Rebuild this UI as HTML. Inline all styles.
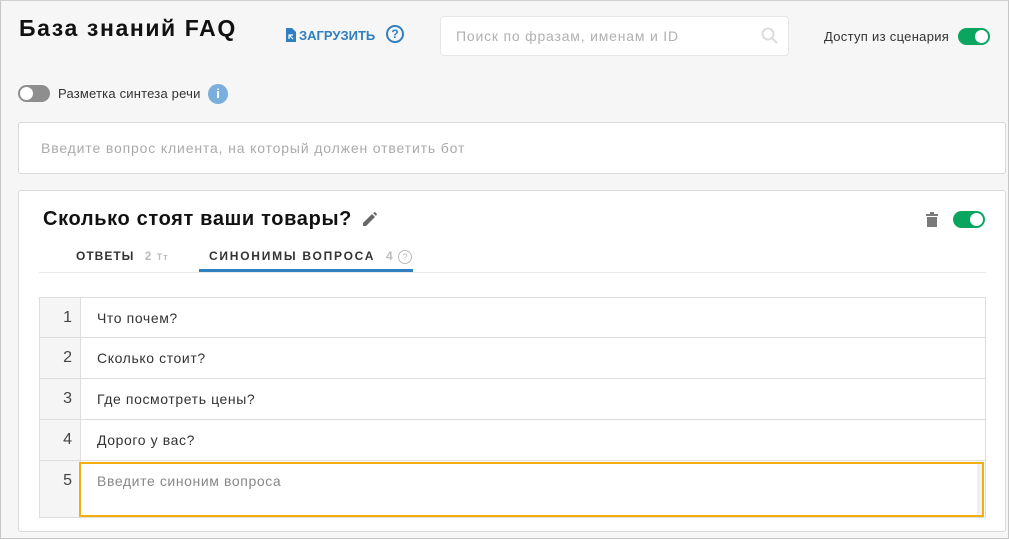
<!DOCTYPE html>
<html><head><meta charset="utf-8"><style>
*{box-sizing:border-box;margin:0;padding:0}
body{width:1009px;height:539px;overflow:hidden;background:#f6f6f6;font-family:"Liberation Sans","DejaVu Sans",sans-serif;color:#222;position:relative}
.frame{position:absolute;left:0;top:0;width:1009px;height:539px;border:1px solid #c6c6c6;border-top-color:#d0d0d0}
.abs{position:absolute}
.tog{position:absolute;width:32px;height:17px;border-radius:9px}
.tog i{position:absolute;top:2px;width:13px;height:13px;border-radius:50%;background:#fff}
.row{position:absolute;left:39px;width:947px;height:41px;border-bottom:1px solid #ddd;background:#fff}
.num{position:absolute;left:0;top:0;width:41px;height:100%;background:#f5f5f5;border-right:1px solid #ddd;text-align:right;padding-right:8px;font-size:16px;line-height:40px;color:#444}
.txt{position:absolute;left:57px;top:0;line-height:40px;font-size:14px;color:#333;letter-spacing:.6px}
</style></head><body>
<div class="frame"></div>
<div class="abs" style="left:19px;top:15px;font-size:23px;font-weight:bold;color:#111;letter-spacing:1.6px">База знаний FAQ</div>
<svg class="abs" style="left:286px;top:28px" width="10" height="14" viewBox="0 0 10 14"><path d="M0 0h6l4 4v10H0z" fill="#2f7fc1"/><path d="M3 7l4 4M3 11V7h4" stroke="#fff" stroke-width="1.2" fill="none"/></svg>
<div class="abs" style="left:299px;top:28px;font-size:13px;font-weight:bold;color:#2f7fc1">ЗАГРУЗИТЬ</div>
<div class="abs" style="left:386px;top:25px;width:18px;height:18px;border:2px solid #2f7fc1;border-radius:50%;color:#2f7fc1;font-size:12px;font-weight:bold;text-align:center;line-height:14px">?</div>
<div class="abs" style="left:440px;top:16px;width:349px;height:40px;background:#fff;border:1px solid #e6e6e6;border-radius:4px;font-size:14px;color:#b0b0b0;padding:11px 15px;letter-spacing:.8px;white-space:nowrap">Поиск по фразам, именам и ID</div>
<svg class="abs" style="left:761px;top:27px" width="17" height="17"><circle cx="7" cy="7" r="5.5" stroke="#ddd" stroke-width="2" fill="none"/><path d="M11 11l5 5" stroke="#ddd" stroke-width="2"/></svg>
<div class="abs" style="left:824px;top:29px;font-size:13px;color:#333;letter-spacing:.3px">Доступ из сценария</div>
<div class="tog" style="left:958px;top:28px;background:#0aa55f"><i style="right:2px"></i></div>
<div class="tog" style="left:18px;top:85px;background:#8e8e8e"><i style="left:2px"></i></div>
<div class="abs" style="left:58px;top:86px;font-size:13px;color:#333;letter-spacing:.2px">Разметка синтеза речи</div>
<div class="abs" style="left:208px;top:84px;width:20px;height:20px;border-radius:50%;background:#7aaedc;color:#fff;font-size:13px;font-weight:bold;text-align:center;line-height:20px">i</div>
<div class="abs" style="left:18px;top:122px;width:988px;height:52px;background:#fff;border:1px solid #dadada;border-radius:3px;font-size:14px;color:#aaa;padding:17px 22px;letter-spacing:.85px;white-space:nowrap">Введите вопрос клиента, на который должен ответить бот</div>
<div class="abs" style="left:18px;top:190px;width:988px;height:342px;background:#fff;border:1px solid #dadada;border-radius:3px"></div>
<div class="abs" style="left:43px;top:208px;font-size:20px;font-weight:bold;color:#111;letter-spacing:.65px">Сколько стоят ваши товары?</div>
<svg class="abs" style="left:363px;top:212px" width="14" height="14" viewBox="0 0 14 14"><path d="M0 14v-3l9-9 3 3-9 9zM10 1l2-1 2 2-1 2z" fill="#666"/></svg>
<svg class="abs" style="left:926px;top:212px" width="12" height="15" viewBox="0 0 12 15"><path d="M0 2h12v2H0zM4 0h4v2H4zM1 5h10v10H1z" fill="#7a7a7a"/></svg>
<div class="tog" style="left:953px;top:211px;background:#0aa55f"><i style="right:2px"></i></div>
<div class="abs" style="left:39px;top:272px;width:947px;height:1px;background:#e8e8e8"></div>
<div class="abs" style="left:76px;top:249px;font-size:12px;font-weight:bold;letter-spacing:1px;color:#333">ОТВЕТЫ <span style="color:#bbb;margin-left:6px">2 <span style="font-size:9px">Tт</span></span></div>
<div class="abs" style="left:209px;top:249px;font-size:12px;font-weight:bold;letter-spacing:1.75px;color:#333">СИНОНИМЫ ВОПРОСА</div>
<div class="abs" style="left:386px;top:249px;font-size:12px;font-weight:bold;color:#bbb">4</div>
<div class="abs" style="left:398px;top:250px;width:14px;height:14px;border:1px solid #bbb;border-radius:50%;font-size:9px;color:#bbb;text-align:center;line-height:12px">?</div>
<div class="abs" style="left:199px;top:269px;width:214px;height:3px;background:#2f7fc1"></div>
<div class="abs" style="left:39px;top:297px;width:947px;height:221px;border:1px solid #ddd;background:#fff"></div>
<div class="row" style="top:297px;border-top:1px solid #ddd;border-left:1px solid #ddd;border-right:1px solid #ddd"><div class="num">1</div><div class="txt">Что почем?</div></div>
<div class="row" style="top:338px;border-left:1px solid #ddd;border-right:1px solid #ddd"><div class="num">2</div><div class="txt">Сколько стоит?</div></div>
<div class="row" style="top:379px;border-left:1px solid #ddd;border-right:1px solid #ddd"><div class="num">3</div><div class="txt">Где посмотреть цены?</div></div>
<div class="row" style="top:420px;border-left:1px solid #ddd;border-right:1px solid #ddd"><div class="num">4</div><div class="txt">Дорого у вас?</div></div>
<div class="row" style="top:461px;height:57px;border-left:1px solid #ddd;border-right:1px solid #ddd;border-bottom:1px solid #ddd"><div class="num" style="line-height:40px">5</div></div>
<div class="abs" style="left:79px;top:462px;width:905px;height:55px;border:2px solid #f4ad0f;background:#fff;font-size:14px;color:#888;padding:9px 16px;letter-spacing:.6px">Введите синоним вопроса</div>
<div class="abs" style="left:977px;top:464px;width:5px;height:51px;background:#f0f0f0"></div>
</body></html>
